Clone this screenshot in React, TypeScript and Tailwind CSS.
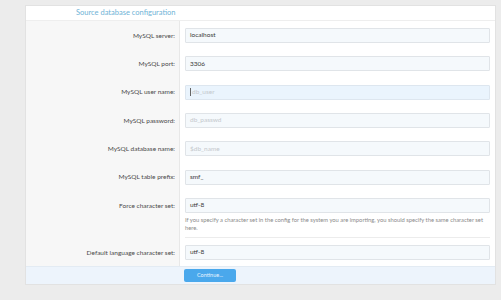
import React from 'react'

type Row = {
  label: string
  value?: string
  placeholder?: string
  focused?: boolean
  help?: string
}

const rows: Row[] = [
  { label: 'MySQL server:', value: 'localhost' },
  { label: 'MySQL port:', value: '3306' },
  { label: 'MySQL user name:', placeholder: 'db_user', focused: true },
  { label: 'MySQL password:', placeholder: 'db_passwd' },
  { label: 'MySQL database name:', placeholder: '$db_name' },
  { label: 'MySQL table prefix:', value: 'smf_' },
  {
    label: 'Force character set:',
    value: 'utf-8',
    help: 'If you specify a character set in the config for the system you are importing, you should specify the same character set here.',
  },
  { label: 'Default language character set:', value: 'utf-8' },
]

const Field = ({ row }: { row: Row }) => {
  const base = 'h-[15px] w-full border rounded-[1px] px-[4px] flex items-center text-[6.5px] leading-none'
  return (
    <div
      className={
        row.focused
          ? base + ' bg-[#eaf4fd] border-[#dde6ef]'
          : base + ' bg-[#f5f9fc] border-[#e0e4e8]'
      }
    >
      {row.focused && <span className="w-px h-[8px] bg-[#666] mr-[1px]" />}
      {row.value ? (
        <span className="text-[#3a3a3a]">{row.value}</span>
      ) : (
        <span className="text-[#c4c8cc]">{row.placeholder}</span>
      )}
    </div>
  )
}

export default function App() {
  return (
    <div
      className="w-[501px] h-[300px] bg-[#ececec] pt-[5px] pl-[25px] overflow-hidden"
      style={{ fontFamily: 'Lato, "Open Sans", sans-serif' }}
    >
      <div className="w-[471px] bg-white border border-[#e2e2e2]">
        <div className="h-[15px] border-b border-[#eeeeee] pl-[50px] flex items-center">
          <span className="text-[7.5px] text-[#6fb3d6]">Source database configuration</span>
        </div>
        {rows.map((row, i) => (
          <div key={i} className="flex">
            <div className="w-[154px] bg-[#f7f7f7] border-r border-[#e8e8e8] pr-[4px] pt-[7px] flex justify-end">
              <span className="h-[15px] flex items-center text-[6.5px] text-[#4a4a4a]">{row.label}</span>
            </div>
            <div className="flex-1 px-[5px]">
              {row.help ? (
                <div className="pt-[7px] pb-[5px] border-b border-[#ececec]">
                  <Field row={row} />
                  <p className="mt-[3px] text-[5.8px] leading-[8px] text-[#8a8a8a]">{row.help}</p>
                </div>
              ) : (
                <div className={i === rows.length - 1 ? 'pt-[7px] pb-[6px]' : 'h-[28.33px] pt-[7px]'}>
                  <Field row={row} />
                </div>
              )}
            </div>
          </div>
        ))}
        <div className="h-[18px] bg-[#edf4fc] border-t border-[#e3ebf3] pl-[158px] flex items-center">
          <button className="w-[52px] h-[13px] bg-[#4aa8ec] rounded-[2px] text-[5.5px] text-[#e8f4ff] flex items-center justify-center">
            Continue...
          </button>
        </div>
      </div>
    </div>
  )
}
